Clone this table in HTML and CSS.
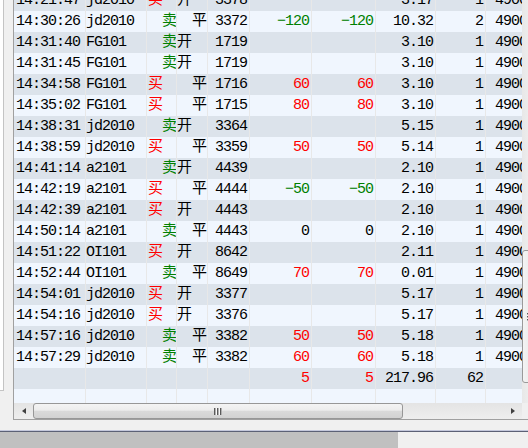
FILE: index.html
```html
<!DOCTYPE html>
<html>
<head>
<meta charset="utf-8">
<link rel="stylesheet" href="styles.css">
</head>
<body>
<div class="window">
  <div class="main">
    <div class="side"><div class="side-panel"></div></div>
    <div class="gridbox">
      <div class="vrow">
        <div class="viewport">
          <div class="table">
            <div class="row g"><div class="cell t">14:21:47</div><div class="cell c">jd2010</div><div class="cell dl red">买</div><div class="cell ol">开</div><div class="cell n">3378</div><div class="cell n"></div><div class="cell n"></div><div class="cell n">3.17</div><div class="cell n">1</div><div class="cell x">4900</div></div>
            <div class="row w"><div class="cell t">14:30:26</div><div class="cell c">jd2010</div><div class="cell dr green">卖</div><div class="cell or">平</div><div class="cell n">3372</div><div class="cell n green">−120</div><div class="cell n green">−120</div><div class="cell n">10.32</div><div class="cell n">2</div><div class="cell x">4900</div></div>
            <div class="row g"><div class="cell t">14:31:40</div><div class="cell c">FG101</div><div class="cell dr green">卖</div><div class="cell ol">开</div><div class="cell n">1719</div><div class="cell n"></div><div class="cell n"></div><div class="cell n">3.10</div><div class="cell n">1</div><div class="cell x">4900</div></div>
            <div class="row w"><div class="cell t">14:31:45</div><div class="cell c">FG101</div><div class="cell dr green">卖</div><div class="cell ol">开</div><div class="cell n">1719</div><div class="cell n"></div><div class="cell n"></div><div class="cell n">3.10</div><div class="cell n">1</div><div class="cell x">4900</div></div>
            <div class="row g"><div class="cell t">14:34:58</div><div class="cell c">FG101</div><div class="cell dl red">买</div><div class="cell or">平</div><div class="cell n">1716</div><div class="cell n red">60</div><div class="cell n red">60</div><div class="cell n">3.10</div><div class="cell n">1</div><div class="cell x">4900</div></div>
            <div class="row w"><div class="cell t">14:35:02</div><div class="cell c">FG101</div><div class="cell dl red">买</div><div class="cell or">平</div><div class="cell n">1715</div><div class="cell n red">80</div><div class="cell n red">80</div><div class="cell n">3.10</div><div class="cell n">1</div><div class="cell x">4900</div></div>
            <div class="row g"><div class="cell t">14:38:31</div><div class="cell c">jd2010</div><div class="cell dr green">卖</div><div class="cell ol">开</div><div class="cell n">3364</div><div class="cell n"></div><div class="cell n"></div><div class="cell n">5.15</div><div class="cell n">1</div><div class="cell x">4900</div></div>
            <div class="row w"><div class="cell t">14:38:59</div><div class="cell c">jd2010</div><div class="cell dl red">买</div><div class="cell or">平</div><div class="cell n">3359</div><div class="cell n red">50</div><div class="cell n red">50</div><div class="cell n">5.14</div><div class="cell n">1</div><div class="cell x">4900</div></div>
            <div class="row g"><div class="cell t">14:41:14</div><div class="cell c">a2101</div><div class="cell dr green">卖</div><div class="cell ol">开</div><div class="cell n">4439</div><div class="cell n"></div><div class="cell n"></div><div class="cell n">2.10</div><div class="cell n">1</div><div class="cell x">4900</div></div>
            <div class="row w"><div class="cell t">14:42:19</div><div class="cell c">a2101</div><div class="cell dl red">买</div><div class="cell or">平</div><div class="cell n">4444</div><div class="cell n green">−50</div><div class="cell n green">−50</div><div class="cell n">2.10</div><div class="cell n">1</div><div class="cell x">4900</div></div>
            <div class="row g"><div class="cell t">14:42:39</div><div class="cell c">a2101</div><div class="cell dl red">买</div><div class="cell ol">开</div><div class="cell n">4443</div><div class="cell n"></div><div class="cell n"></div><div class="cell n">2.10</div><div class="cell n">1</div><div class="cell x">4900</div></div>
            <div class="row w"><div class="cell t">14:50:14</div><div class="cell c">a2101</div><div class="cell dr green">卖</div><div class="cell or">平</div><div class="cell n">4443</div><div class="cell n">0</div><div class="cell n">0</div><div class="cell n">2.10</div><div class="cell n">1</div><div class="cell x">4900</div></div>
            <div class="row g"><div class="cell t">14:51:22</div><div class="cell c">OI101</div><div class="cell dl red">买</div><div class="cell ol">开</div><div class="cell n">8642</div><div class="cell n"></div><div class="cell n"></div><div class="cell n">2.11</div><div class="cell n">1</div><div class="cell x">4900</div></div>
            <div class="row w"><div class="cell t">14:52:44</div><div class="cell c">OI101</div><div class="cell dr green">卖</div><div class="cell or">平</div><div class="cell n">8649</div><div class="cell n red">70</div><div class="cell n red">70</div><div class="cell n">0.01</div><div class="cell n">1</div><div class="cell x">4900</div></div>
            <div class="row g"><div class="cell t">14:54:01</div><div class="cell c">jd2010</div><div class="cell dl red">买</div><div class="cell ol">开</div><div class="cell n">3377</div><div class="cell n"></div><div class="cell n"></div><div class="cell n">5.17</div><div class="cell n">1</div><div class="cell x">4900</div></div>
            <div class="row w"><div class="cell t">14:54:16</div><div class="cell c">jd2010</div><div class="cell dl red">买</div><div class="cell ol">开</div><div class="cell n">3376</div><div class="cell n"></div><div class="cell n"></div><div class="cell n">5.17</div><div class="cell n">1</div><div class="cell x">4900</div></div>
            <div class="row g"><div class="cell t">14:57:16</div><div class="cell c">jd2010</div><div class="cell dr green">卖</div><div class="cell or">平</div><div class="cell n">3382</div><div class="cell n red">50</div><div class="cell n red">50</div><div class="cell n">5.18</div><div class="cell n">1</div><div class="cell x">4900</div></div>
            <div class="row w"><div class="cell t">14:57:29</div><div class="cell c">jd2010</div><div class="cell dr green">卖</div><div class="cell or">平</div><div class="cell n">3382</div><div class="cell n red">60</div><div class="cell n red">60</div><div class="cell n">5.18</div><div class="cell n">1</div><div class="cell x">4900</div></div>
            <div class="row g"><div class="cell t"></div><div class="cell c"></div><div class="cell"></div><div class="cell"></div><div class="cell n"></div><div class="cell n red">5</div><div class="cell n red">5</div><div class="cell n">217.96</div><div class="cell n">62</div><div class="cell x"></div></div>
            <div class="row w"><div class="cell t"></div><div class="cell c"></div><div class="cell"></div><div class="cell"></div><div class="cell n"></div><div class="cell n"></div><div class="cell n"></div><div class="cell n"></div><div class="cell n"></div><div class="cell x"></div></div>
          </div>
        </div>
        <div class="vscroll">
          <div class="vthumb"><span class="vgrip"></span></div>
          <div class="vbtn"><span class="tri-d"></span></div>
        </div>
      </div>
      <div class="hrow">
        <div class="hscroll">
          <div class="hbtn"><span class="tri-l"></span></div>
          <div class="hthumb"><span class="hgrip"></span></div>
          <div class="htrack"></div>
          <div class="hbtn"><span class="tri-r"></span></div>
        </div>
        <div class="corner"></div>
      </div>
    </div>
  </div>
  <div class="status"></div>
  <div class="sep"></div>
  <div class="bottom"><div class="bottom-bar"></div></div>
</div>
</body>
</html>
```
FILE: styles.css
```css
html, body {
  margin: 0;
  padding: 0;
}
body {
  width: 528px;
  height: 448px;
  overflow: hidden;
  background: #f0f0f0;
  font-family: "Liberation Mono", "Noto Sans CJK SC", monospace;
}
.window {
  display: flex;
  flex-direction: column;
  height: 448px;
}
.main {
  display: flex;
  height: 420px;
  flex: none;
}
.side {
  width: 13px;
  flex: none;
}
.side-panel {
  width: 3px;
  height: 390px;
  background: #ffffff;
  border-right: 1px solid #c4c4c4;
  border-bottom: 1px solid #c4c4c4;
}
.gridbox {
  flex: none;
  width: 525px;
  border-left: 1px solid #a0a0a0;
  border-bottom: 1px solid #a0a0a0;
  display: flex;
  flex-direction: column;
}
.vrow {
  display: flex;
  height: 403px;
}
.viewport {
  width: 508px;
  flex: none;
  overflow: hidden;
  background: #f0f6fe;
}
.table {
  margin-top: -10px;
}
.row {
  display: grid;
  grid-template-columns: 72px 61px 30px 31px 42px 62px 64px 60px 50px 80px;
  height: 21px;
  line-height: 21px;
  font-size: 15px;
  letter-spacing: -1px;
  color: #000;
}
.row.g { background: #dce3eb; }
.row.w { background: #f0f6fe; }
.cell {
  box-sizing: border-box;
  border-right: 1px solid #e8e8e8;
  white-space: nowrap;
  overflow: hidden;
}
.t { padding-left: 2px; }
.c { padding-left: 0; }
.dl { text-align: left; padding-left: 1px; }
.dr { text-align: right; padding-right: 0; }
.ol { text-align: left; padding-left: 0; }
.or { text-align: right; padding-right: 1px; }
.n { text-align: right; padding-right: 2px; }
.x { padding-left: 9px; }
.red { color: #ff0000; }
.green { color: #008000; }

.vscroll {
  width: 17px;
  flex: none;
  background: linear-gradient(90deg, #e8e8e8, #f3f3f3);
  display: flex;
  flex-direction: column;
}
.vthumb {
  margin-top: 250px;
  height: 133px;
  box-sizing: border-box;
  border: 1px solid #9a9a9a;
  border-radius: 3px;
  background: linear-gradient(90deg, #f4f4f4 0%, #ececec 45%, #dadada 50%, #d4d4d4 100%);
  display: flex;
  align-items: center;
  justify-content: center;
}
.vgrip {
  width: 7px;
  height: 8px;
  background: repeating-linear-gradient(180deg, #5a5a5a 0 1px, #b0b0b0 1px 2px, #f8f8f8 2px 3px);
}
.vbtn {
  margin-top: auto;
  height: 17px;
  display: flex;
  align-items: center;
  justify-content: center;
}
.tri-d {
  width: 0;
  height: 0;
  border-left: 3.5px solid transparent;
  border-right: 3.5px solid transparent;
  border-top: 4px solid #404040;
}

.hrow {
  display: flex;
  height: 16px;
}
.hscroll {
  width: 508px;
  flex: none;
  display: flex;
  background: linear-gradient(#e4e4e4, #eeeeee);
}
.hbtn {
  width: 19px;
  flex: none;
  display: flex;
  align-items: center;
  justify-content: center;
}
.tri-l {
  width: 0;
  height: 0;
  border-top: 3.5px solid transparent;
  border-bottom: 3.5px solid transparent;
  border-right: 4px solid #404040;
}
.tri-r {
  width: 0;
  height: 0;
  border-top: 3.5px solid transparent;
  border-bottom: 3.5px solid transparent;
  border-left: 4px solid #404040;
}
.hthumb {
  width: 370px;
  flex: none;
  box-sizing: border-box;
  border: 1px solid #979797;
  border-radius: 3px;
  background: linear-gradient(#f4f4f4 0%, #ececec 45%, #dadada 50%, #d2d2d2 100%);
  display: flex;
  align-items: center;
  justify-content: center;
}
.hgrip {
  width: 8px;
  height: 7px;
  background: repeating-linear-gradient(90deg, #5a5a5a 0 1px, #b0b0b0 1px 2px, #f8f8f8 2px 3px);
}
.htrack {
  flex: 1;
}
.corner {
  width: 17px;
  flex: none;
  background: #f0f0f0;
}

.status {
  height: 10px;
  flex: none;
}
.sep {
  height: 2px;
  flex: none;
  background: linear-gradient(#c4c8dc 50%, #5c6176 50%);
}
.bottom {
  height: 16px;
  flex: none;
  display: flex;
}
.bottom-bar {
  width: 398px;
  background: #c0c0c0;
}
```
